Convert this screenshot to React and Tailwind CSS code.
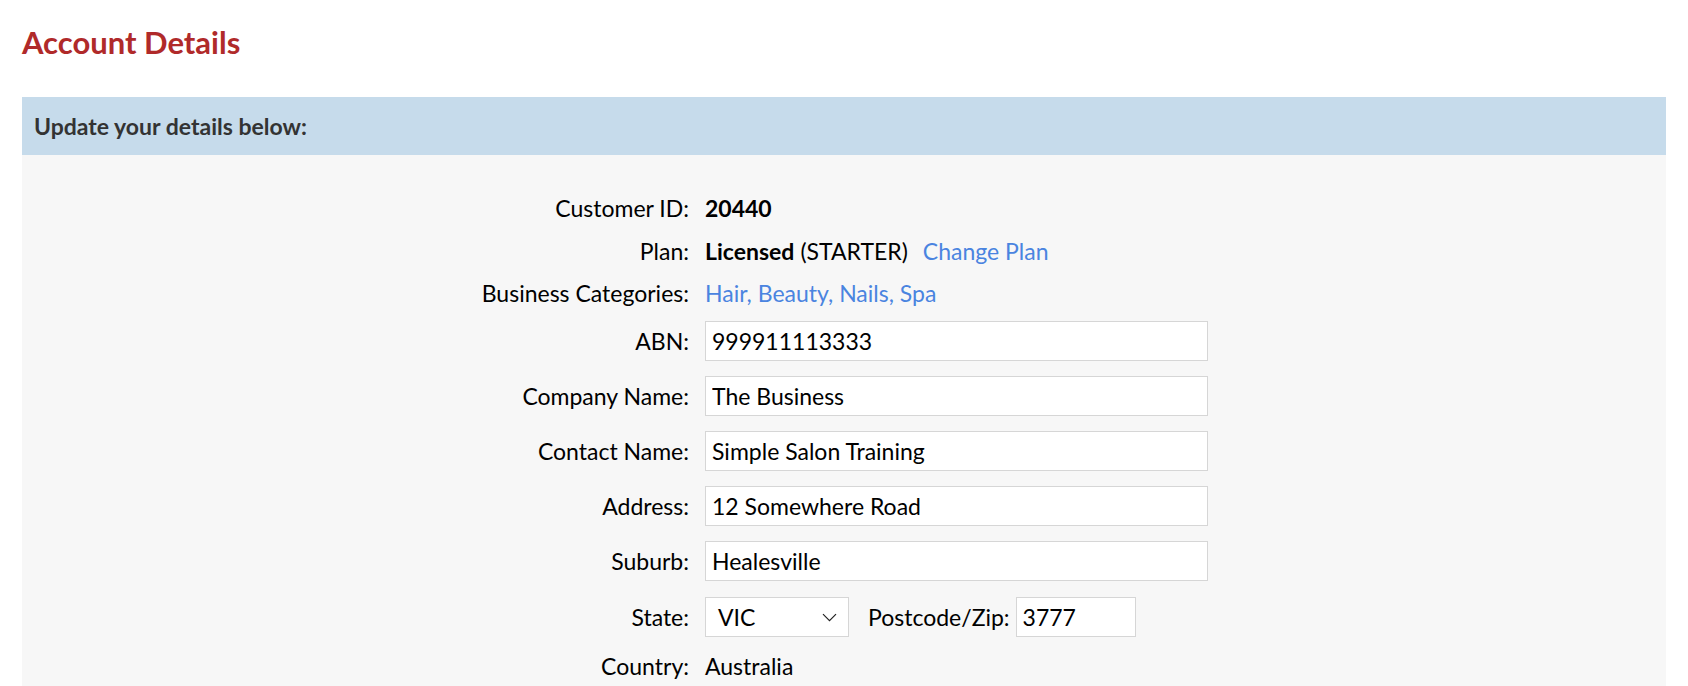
import React from "react";

const inputCls =
  "h-[40px] border border-[#d6d6d6] bg-white px-[6px] text-[23px] text-black outline-none";

function Label({ children }) {
  return <div className="text-right text-[23px] text-black whitespace-nowrap">{children}</div>;
}

function Row({ label, children, className = "" }) {
  return (
    <div className={"grid grid-cols-[667px_1fr] gap-x-[16px] items-center " + className}>
      <Label>{label}</Label>
      <div className="flex items-center text-[23px] text-black">{children}</div>
    </div>
  );
}

export default function App() {
  return (
    <div className="min-h-[686px] bg-white" style={{ fontFamily: "Lato, 'Open Sans', sans-serif" }}>
      <div className="px-[22px] pt-[22px]">
        <h1 className="text-[31px] font-bold leading-[40px] text-[#b02a2a]">Account Details</h1>
        <div className="mt-[35px]">
          <div className="flex h-[58px] items-center bg-[#c6dbeb] px-[12px]">
            <span className="text-[23px] font-bold text-[#333333]">Update your details below:</span>
          </div>
          <div className="bg-[#f7f7f7] pt-[36px] pb-[20px]">
            <Row label="Customer ID:" className="h-[30px]">
              <span className="font-bold">20440</span>
            </Row>
            <Row label="Plan:" className="mt-[13px] h-[30px]">
              <span className="font-bold">Licensed</span>
              <span className="ml-[6px]">(STARTER)</span>
              <a className="ml-[15px] text-[#4a84e0]">Change Plan</a>
            </Row>
            <Row label="Business Categories:" className="mt-[12px] h-[30px]">
              <a className="text-[#4a84e0]">Hair, Beauty, Nails, Spa</a>
            </Row>
            <Row label="ABN:" className="mt-[15px]">
              <input className={inputCls + " w-[503px]"} defaultValue="999911113333" />
            </Row>
            <Row label="Company Name:" className="mt-[15px]">
              <input className={inputCls + " w-[503px]"} defaultValue="The Business" />
            </Row>
            <Row label="Contact Name:" className="mt-[15px]">
              <input className={inputCls + " w-[503px]"} defaultValue="Simple Salon Training" />
            </Row>
            <Row label="Address:" className="mt-[15px]">
              <input className={inputCls + " w-[503px]"} defaultValue="12 Somewhere Road" />
            </Row>
            <Row label="Suburb:" className="mt-[15px]">
              <input className={inputCls + " w-[503px]"} defaultValue="Healesville" />
            </Row>
            <Row label="State:" className="mt-[16px]">
              <div className="flex h-[40px] w-[144px] items-center justify-between border border-[#d6d6d6] bg-white pl-[12px] pr-[11px]">
                <span>VIC</span>
                <svg width="15" height="9" viewBox="0 0 15 9" fill="none">
                  <path d="M1 1.2L7.5 7.7L14 1.2" stroke="#222" strokeWidth="1.2" />
                </svg>
              </div>
              <span className="ml-[19px] whitespace-nowrap">Postcode/Zip:</span>
              <input className={inputCls + " ml-[6px] w-[120px]"} defaultValue="3777" />
            </Row>
            <Row label="Country:" className="mt-[12px] h-[30px]">
              <span>Australia</span>
            </Row>
          </div>
        </div>
      </div>
    </div>
  );
}
